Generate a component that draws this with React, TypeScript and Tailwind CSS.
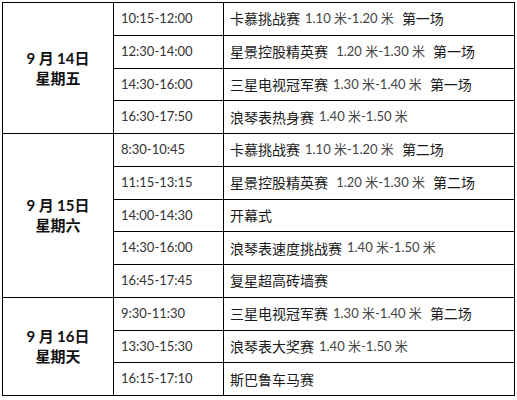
import React from "react";

interface Slot {
  time: string;
  name: string;
  spec?: string;
  round?: string;
}

interface Day {
  date: React.ReactNode;
  week: string;
  slots: Slot[];
}

const days: Day[] = [
  {
    date: "14",
    week: "星期五",
    slots: [
      { time: "10:15-12:00", name: "卡慕挑战赛", spec: "1.10 米-1.20 米", round: "第一场" },
      { time: "12:30-14:00", name: "星景控股精英赛 ", spec: "1.20 米-1.30 米", round: "第一场" },
      { time: "14:30-16:00", name: "三星电视冠军赛", spec: "1.30 米-1.40 米", round: "第一场" },
      { time: "16:30-17:50", name: "浪琴表热身赛", spec: "1.40 米-1.50 米" },
    ],
  },
  {
    date: "15",
    week: "星期六",
    slots: [
      { time: "8:30-10:45", name: "卡慕挑战赛", spec: "1.10 米-1.20 米", round: "第二场" },
      { time: "11:15-13:15", name: "星景控股精英赛 ", spec: "1.20 米-1.30 米", round: "第二场" },
      { time: "14:00-14:30", name: "开幕式" },
      { time: "14:30-16:00", name: "浪琴表速度挑战赛", spec: "1.40 米-1.50 米" },
      { time: "16:45-17:45", name: "复星超高砖墙赛" },
    ],
  },
  {
    date: "16",
    week: "星期天",
    slots: [
      { time: "9:30-11:30", name: "三星电视冠军赛", spec: "1.30 米-1.40 米", round: "第二场" },
      { time: "13:30-15:30", name: "浪琴表大奖赛", spec: "1.40 米-1.50 米" },
      { time: "16:15-17:10", name: "斯巴鲁车马赛" },
    ],
  },
];

const spans = ["row-span-4", "row-span-5", "row-span-3"];

const cjk = "font-['Noto_Sans_CJK_SC',sans-serif]";
const latin = "font-['Lato','Noto_Sans_CJK_SC',sans-serif]";

const App = () => {
  return (
    <div className="w-[517px] h-[400px] bg-white pt-[2px] pl-[2px]">
      <div className="grid grid-cols-[110px_109px_290px] grid-rows-[repeat(12,minmax(0,1fr))] gap-px p-px bg-black w-[513px] h-[394px]">
        {days.map((day, i) => (
          <React.Fragment key={i}>
            <div
              className={`${spans[i]} col-start-1 bg-white flex flex-col items-center justify-center text-[15px] leading-[20px] font-bold text-[#111] ${cjk}`}
            >
              <div>
                <span className={latin}>9</span> 月 <span className={latin}>{day.date}</span>日
              </div>
              <div>{day.week}</div>
            </div>
            {day.slots.map((slot, j) => (
              <React.Fragment key={j}>
                <div
                  className={`col-start-2 bg-white flex items-center pl-[7px] text-[13px] text-[#333] ${latin}`}
                >
                  {slot.time}
                </div>
                <div
                  className={`col-start-3 bg-white flex items-center pl-[6px] text-[14px] text-[#1a1a1a] whitespace-pre ${cjk}`}
                >
                  <span>{slot.name}</span>
                  {slot.spec && (
                    <span className={`ml-[5px] text-[13px] text-[#444] ${latin}`}>
                      {slot.spec}
                    </span>
                  )}
                  {slot.round && <span className="ml-[8px]">{slot.round}</span>}
                </div>
              </React.Fragment>
            ))}
          </React.Fragment>
        ))}
      </div>
    </div>
  );
};

export default App;
